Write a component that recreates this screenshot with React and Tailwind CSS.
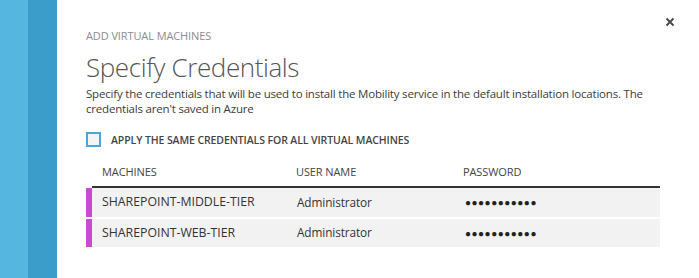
import React from 'react';

const rows = [
  { name: 'SHAREPOINT-MIDDLE-TIER', user: 'Administrator' },
  { name: 'SHAREPOINT-WEB-TIER', user: 'Administrator' },
];

const App = () => {
  return (
    <div className="w-[699px] h-[278px] flex bg-white overflow-hidden" style={{ fontFamily: '"Open Sans", "Noto Sans", sans-serif' }}>
      {/* side bars */}
      <div className="w-[28px] h-full bg-[#55b6df]"></div>
      <div className="w-[29px] h-full bg-[#3b9dc9]"></div>

      <div className="relative flex-1 pl-[29px] pt-[29px]">
        <button className="absolute right-[24px] top-[17px] text-[#444]">
          <svg width="10" height="10" viewBox="0 0 10 10">
            <path d="M1.5 1.5 L8.5 8.5 M8.5 1.5 L1.5 8.5" stroke="#4a4a4a" strokeWidth="2" />
          </svg>
        </button>

        <div className="text-[11px] leading-[14px] text-[#8c8c8c] tracking-[-0.1px]">ADD VIRTUAL MACHINES</div>
        <h2 className="mt-[9px] text-[26px] leading-[30px] font-light text-[#555] tracking-[-0.4px]">Specify Credentials</h2>
        <p className="mt-[4px] w-[580px] text-[11.5px] leading-[15px] text-[#3c3c3c] tracking-[-0.2px]">
          Specify the credentials that will be used to install the Mobility service in the default installation locations. The credentials aren't saved in Azure
        </p>

        <label className="mt-[16px] flex items-center gap-[10px]">
          <span className="w-[15px] h-[15px] border-2 border-[#4aa5dc] bg-[#f4f4f4]"></span>
          <span className="text-[10.5px] leading-[14px] font-semibold text-[#444] tracking-[-0.1px]">APPLY THE SAME CREDENTIALS FOR ALL VIRTUAL MACHINES</span>
        </label>

        <div className="mt-[11px] w-[574px]">
          <div className="flex ml-[6px] h-[30px] items-center border-b-[2px] border-[#333] text-[11px] text-[#444] tracking-[-0.1px]">
            <div className="w-[195px] pl-[10px]">MACHINES</div>
            <div className="w-[166px] pl-[9px]">USER NAME</div>
            <div className="flex-1 pl-[10px]">PASSWORD</div>
          </div>
          {rows.map((r, i) => (
            <div key={r.name} className={`flex h-[29px] ${i > 0 ? 'mt-[1px] border-t border-dotted border-white' : 'mt-[0px]'}`}>
              <div className="w-[6px] bg-[#c94bd3]"></div>
              <div className="flex flex-1 items-center bg-[#f2f2f2] text-[12.3px] text-[#333]">
                <div className="w-[195px] pl-[10px]">{r.name}</div>
                <div className="w-[166px] pl-[10px] text-[11.8px] tracking-[-0.1px]">{r.user}</div>
                <div className="flex-1 pl-[12px] text-[#222] text-[10px] tracking-[0.5px]">●●●●●●●●●●●</div>
              </div>
            </div>
          ))}
        </div>
      </div>
    </div>
  );
};

export default App;
